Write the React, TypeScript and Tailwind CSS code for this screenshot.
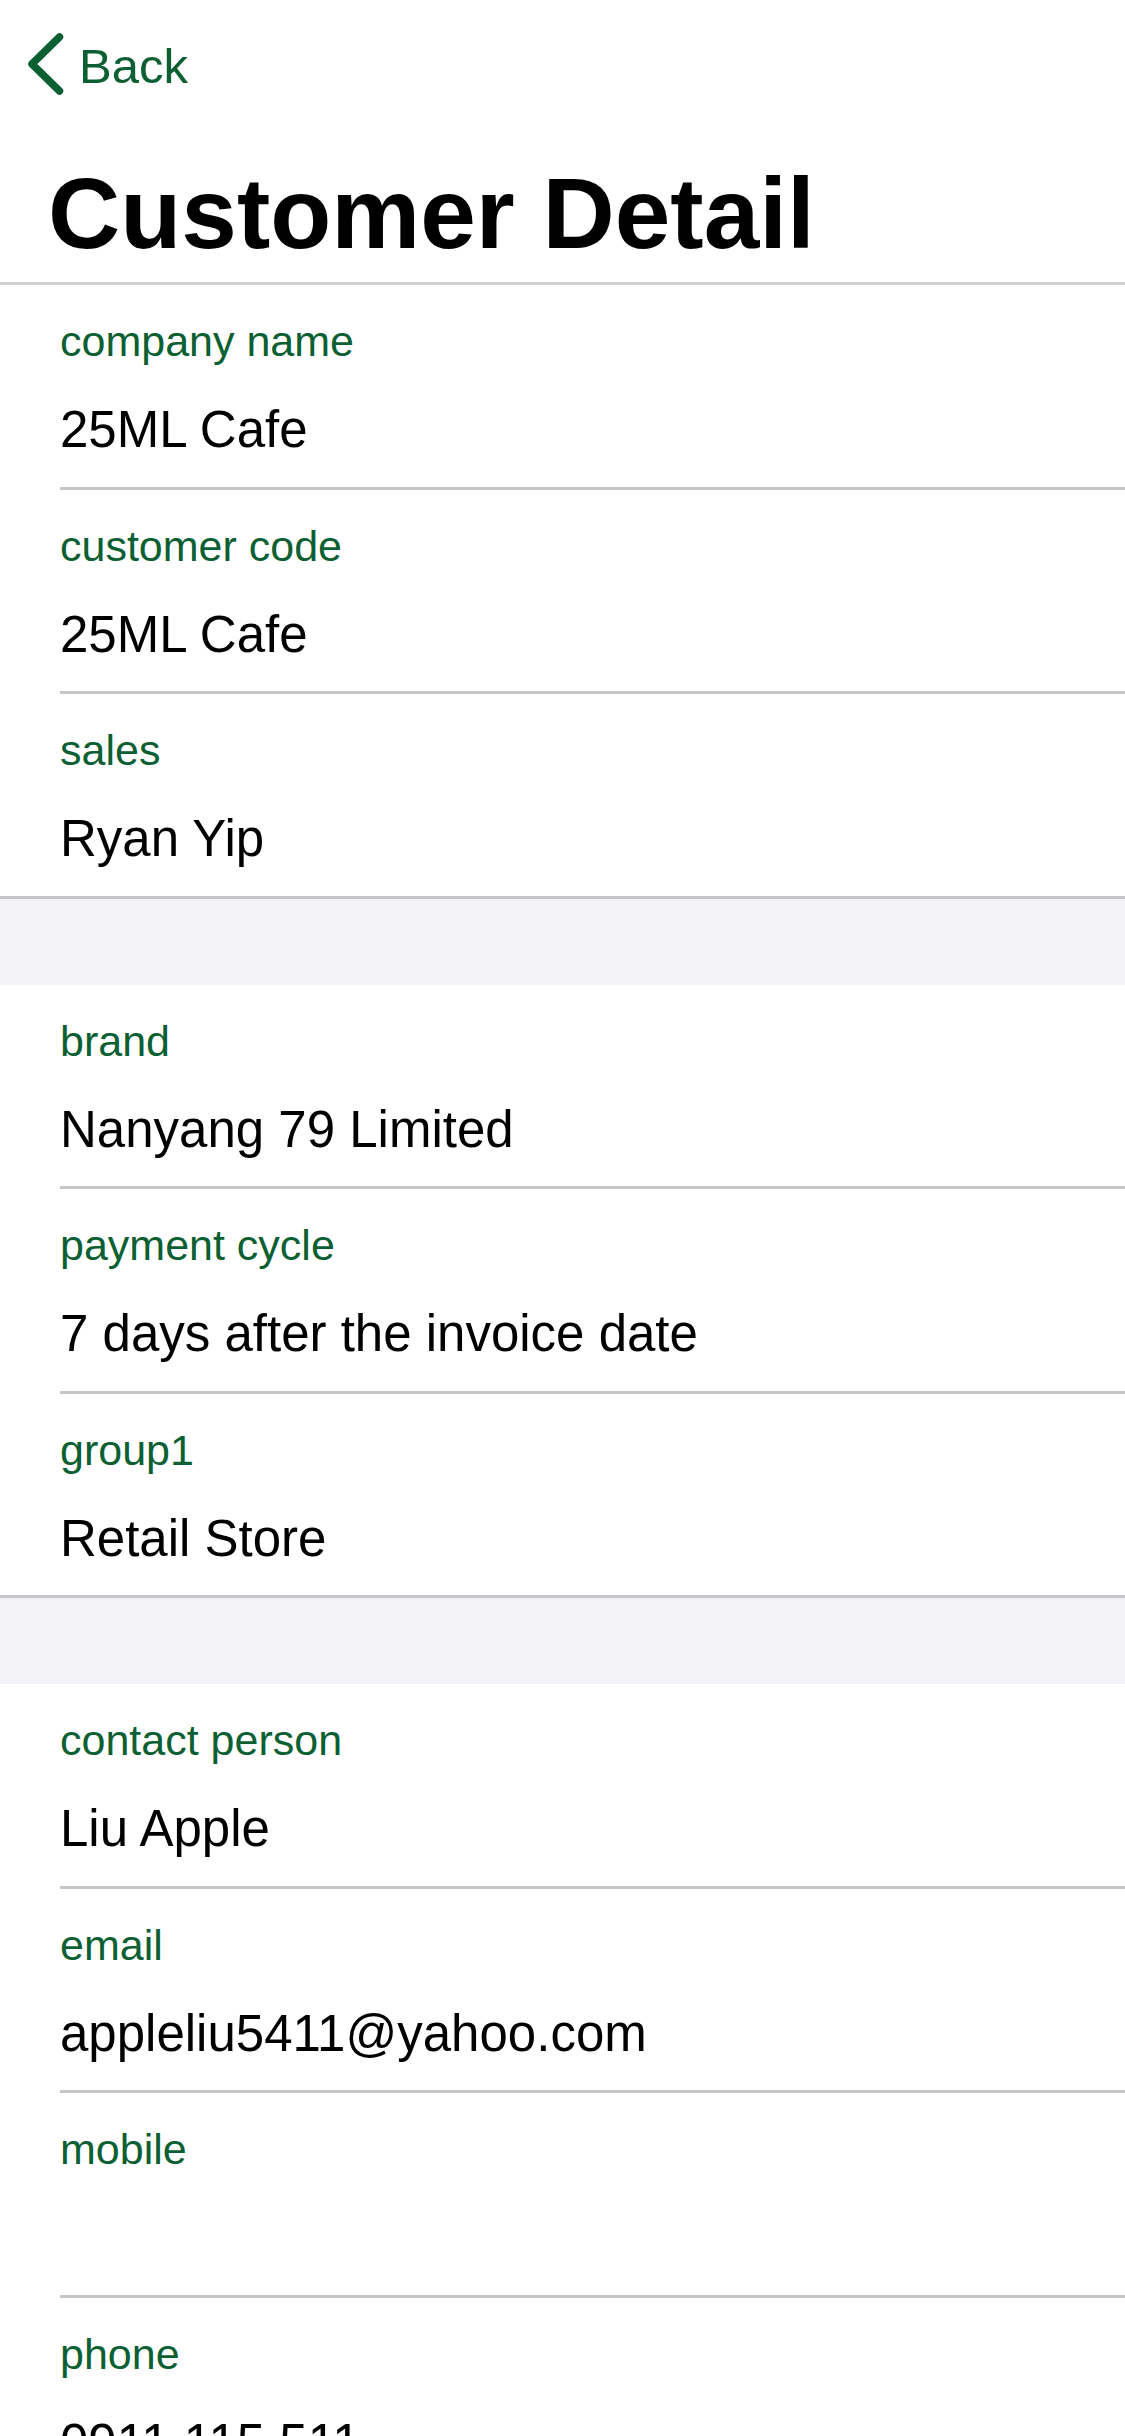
import React from "react";

type Field = {
  label: string;
  value: string;
};

const groups: Field[][] = [
  [
    { label: "company name", value: "25ML Cafe" },
    { label: "customer code", value: "25ML Cafe" },
    { label: "sales", value: "Ryan Yip" },
  ],
  [
    { label: "brand", value: "Nanyang 79 Limited" },
    { label: "payment cycle", value: "7 days after the invoice date" },
    { label: "group1", value: "Retail Store" },
  ],
  [
    { label: "contact person", value: "Liu Apple" },
    { label: "email", value: "appleliu5411@yahoo.com" },
    { label: "mobile", value: "" },
    { label: "phone", value: "0911 115 511" },
  ],
];

function FieldRow({ field, last }: { field: Field; last: boolean }) {
  return (
    <div className={last ? "border-b-[3px] border-[#c6c6c8] pl-[60px]" : "pl-[60px]"}>
      <div
        className={
          last
            ? "h-[201.5px] pt-[30px]"
            : "h-[204.5px] pt-[30px] border-b-[3px] border-[#c6c6c8]"
        }
      >
        <div className="text-[43px] leading-[52px] text-[#0b5f32]">{field.label}</div>
        <div className="mt-[33px] text-[51px] leading-[60px] text-black whitespace-nowrap">
          {field.value}
        </div>
      </div>
    </div>
  );
}

export default function App() {
  return (
    <div
      className="min-h-screen w-full bg-white"
      style={{ fontFamily: '"Liberation Sans", Arial, sans-serif' }}
    >
      {/* nav */}
      <div className="flex items-start pt-[35px] pl-[28px]">
        <svg width="36" height="58" viewBox="0 0 36 58" fill="none" className="overflow-visible">
          <path
            d="M31.5 2 L4 29 L31.5 56"
            stroke="#0b5f32"
            strokeWidth="7.5"
            strokeLinecap="round"
            strokeLinejoin="round"
          />
        </svg>
        <span className="ml-[15px] mt-[3px] text-[49px] leading-[56px] text-[#0b5f32]">Back</span>
      </div>

      {/* title */}
      <div className="mt-[69px] pl-[48px] pb-[19px] border-b-[3px] border-[#d1d1d3]">
        <h1 className="text-[100px] leading-[100px] font-bold text-black">Customer Detail</h1>
      </div>

      {groups.map((group, gi) => (
        <div key={gi}>
          {gi > 0 && <div className="h-[86px] bg-[#f2f2f7]" />}
          {group.map((f, i) => (
            <FieldRow key={f.label} field={f} last={i === group.length - 1 && gi < groups.length - 1} />
          ))}
        </div>
      ))}
    </div>
  );
}
